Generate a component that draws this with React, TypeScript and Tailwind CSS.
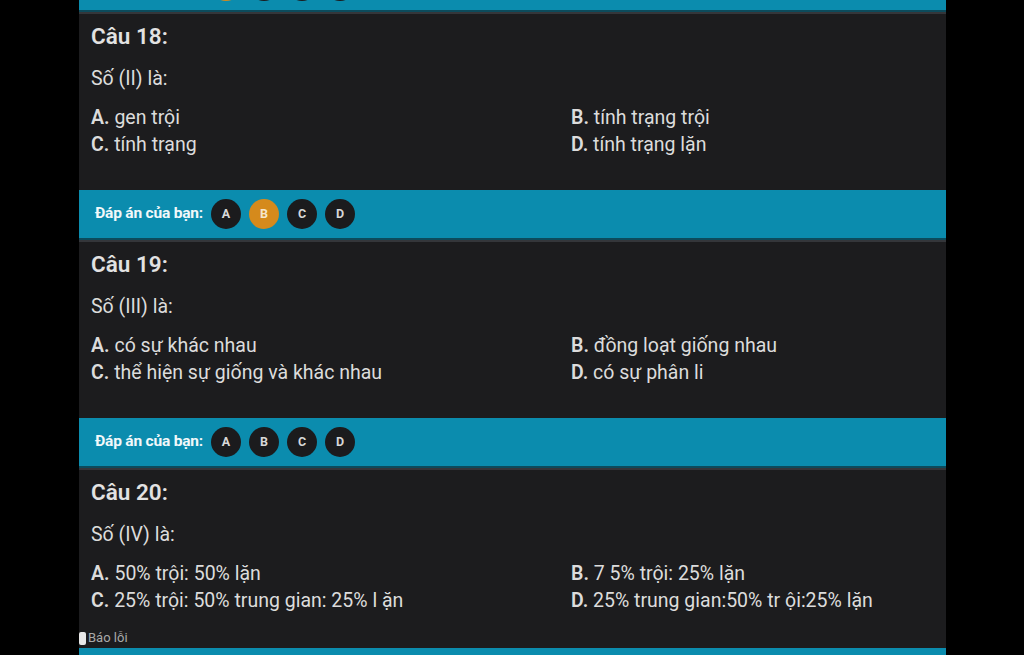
import React from 'react';

type Question = {
  num: number;
  prompt: string;
  options: [string, string][];
  picked: string | null;
  report?: boolean;
};

const questions: Question[] = [
  {
    num: 18,
    prompt: 'Số (II) là:',
    options: [
      ['A', 'gen trội'],
      ['B', 'tính trạng trội'],
      ['C', 'tính trạng'],
      ['D', 'tính trạng lặn'],
    ],
    picked: 'B',
  },
  {
    num: 19,
    prompt: 'Số (III) là:',
    options: [
      ['A', 'có sự khác nhau'],
      ['B', 'đồng loạt giống nhau'],
      ['C', 'thể hiện sự giống và khác nhau'],
      ['D', 'có sự phân li'],
    ],
    picked: null,
  },
  {
    num: 20,
    prompt: 'Số (IV) là:',
    options: [
      ['A', '50% trội: 50% lặn'],
      ['B', '7 5% trội: 25% lặn'],
      ['C', '25% trội: 50% trung gian: 25% l ặn'],
      ['D', '25% trung gian:50% tr ội:25% lặn'],
    ],
    picked: null,
    report: true,
  },
];

const AnswerBar = ({ picked }: { picked: string | null }) => (
  <div className="h-[48px] bg-[#0b8cae] flex items-center pl-4">
    <span className="text-[15.5px] font-bold text-[#f2f8fa] tracking-[-0.2px] mr-[8px]">Đáp án của bạn:</span>
    <div className="flex gap-[8px]">
      {['A', 'B', 'C', 'D'].map((l) => (
        <div
          key={l}
          className={`w-[30px] h-[30px] rounded-full flex items-center justify-center text-[12.5px] font-bold ${
            picked === l ? 'bg-[#d58a1c] text-[#f6e6cc]' : 'bg-[#1b1b1d] text-[#d8d8d8]'
          }`}
        >
          {l}
        </div>
      ))}
    </div>
  </div>
);

const Divider = () => (
  <div>
    <div className="h-[2px] bg-[#0c4b5c]" />
    <div className="h-[2px] bg-[#34363a]" />
  </div>
);

const QuestionBlock = ({ q }: { q: Question }) => (
  <div className={q.report ? 'pb-[2px]' : 'pb-[32px]'}>
    <div className="px-3 pt-[8px]">
      <h2 className="text-[22.5px] leading-[28px] font-semibold text-[#e2e2e2]">Câu {q.num}:</h2>
      <p className="mt-[16px] text-[19.5px] leading-[26px] text-[#dcdcdc]">{q.prompt}</p>
      <div className="mt-[12px] grid grid-cols-[480px_1fr] text-[19.5px] leading-[27px] text-[#dcdcdc]">
        {q.options.map(([l, t]) => (
          <div key={l}>
            <span className="font-semibold">{l}.</span> {t}
          </div>
        ))}
      </div>
    </div>
    {q.report && (
      <div className="mt-[16px] flex items-center h-[16px]">
        <span className="w-[7px] h-[13px] rounded-[2px] bg-[#e8e8e8]" />
        <span className="ml-[2px] text-[13px] text-[#a9a9a9]">Báo lỗi</span>
      </div>
    )}
  </div>
);

export default function App() {
  return (
    <div className="w-[1024px] h-[655px] bg-black overflow-hidden" style={{ fontFamily: 'Roboto, "Noto Sans", sans-serif' }}>
      <div className="ml-[79px] w-[867px] bg-[#1c1c1e] -mt-[38px]">
        <AnswerBar picked="A" />
        {questions.map((q, i) => (
          <React.Fragment key={q.num}>
            {i > 0 && <AnswerBar picked={questions[i - 1].picked} />}
            <Divider />
            <QuestionBlock q={q} />
          </React.Fragment>
        ))}
        <AnswerBar picked={null} />
      </div>
    </div>
  );
}
